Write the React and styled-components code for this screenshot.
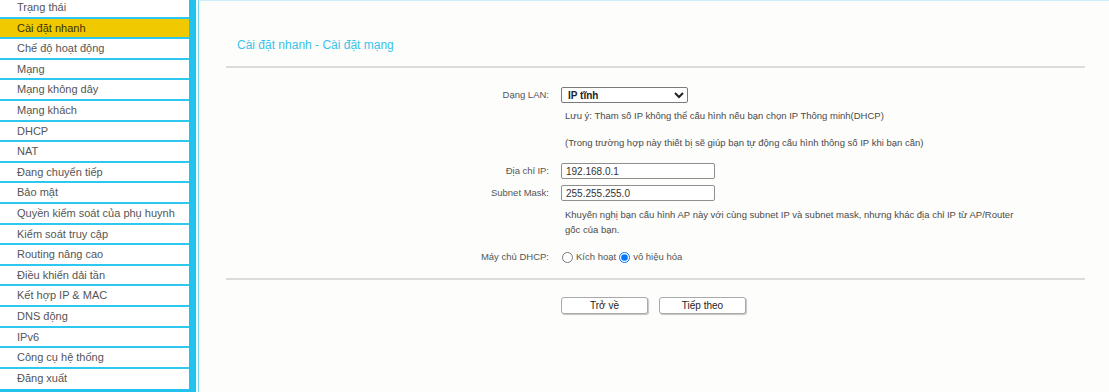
import React from 'react';
import styled, { createGlobalStyle } from 'styled-components';

const GlobalStyle = createGlobalStyle`
    html, body {
        margin: 0;
        padding: 0;
        background: #fdfdfb;
        font-family: "Liberation Sans", Arial, sans-serif;
        overflow: hidden;
    }
`;

const Page = styled.div`
    display: flex;
    align-items: flex-start;
    width: 1109px;
    height: 392px;
    overflow: hidden;
    background: #fdfdfb;
`;

const Sidebar = styled.ul`
    flex: 0 0 189px;
    margin: -2px 0 0 0;
    padding: 0;
    list-style: none;
    border-right: 7px solid #22c4ef;
    border-bottom: 4px solid #22c4ef;
    background: #fff;
`;

const MenuItem = styled.li`
    height: 18.6px;
    line-height: 18.6px;
    padding-left: 17px;
    border-bottom: 2px solid #2cc8f0;
    font-size: 11px;
    color: ${p => (p.$active ? '#3a3000' : '#555')};
    background: ${p => (p.$active ? '#f1c900' : '#fff')};
    white-space: nowrap;

    &:last-child {
        border-bottom: 0;
        height: 20.6px;
    }
`;

const Main = styled.div`
    flex: 1;
    align-self: stretch;
    margin-left: 2px;
    border-left: 1px solid #6fd6f3;
    border-top: 1px solid #c9f1fb;
    background: #fdfdfb;
`;

const Title = styled.h2`
    margin: 0;
    padding: 37px 0 0 38px;
    height: 28px;
    font-size: 12px;
    font-weight: normal;
    color: #39c3ea;
`;

const Rule = styled.div`
    margin: 0 24px 0 27px;
    height: 2px;
    background: #dcdcdc;
`;

const Form = styled.div`
    display: grid;
    grid-template-columns: 323px auto;
    column-gap: 12px;
    padding: 19px 0 0 27px;
    height: 191px;
    align-content: start;
    font-size: 9.5px;
    color: #555;
`;

const Label = styled.div`
    text-align: right;
    height: ${p => p.$h || 22}px;
    line-height: 16px;
`;

const Control = styled.div`
    display: flex;
    align-items: flex-start;
    height: ${p => p.$h || 22}px;
`;

const Select = styled.select`
    width: 127px;
    height: 16px;
    padding: 0 2px;
    border: 1px solid #7a7a7a;
    border-radius: 2px;
    background: #fff;
    font-family: inherit;
    font-size: 10px;
    font-weight: bold;
    color: #222;
`;

const Note = styled.div`
    grid-column: 2;
    padding-left: 4px;
    height: ${p => p.$h}px;
    line-height: 15px;
    color: #4a4a4a;
`;

const TextInput = styled.input`
    box-sizing: border-box;
    width: 154px;
    height: 16px;
    padding: 0 4px;
    border: 1px solid #8f8f8f;
    border-radius: 2px;
    background: #fff;
    font-family: inherit;
    font-size: 10px;
    color: #333;
    outline: none;
`;

const RadioLabel = styled.label`
    display: inline-flex;
    align-items: center;
    gap: 2px;
    margin-right: 2px;
    line-height: 16px;
    color: #555;
`;

const Radio = styled.input`
    width: 11px;
    height: 11px;
    margin: 0 1px 0 1px;
`;

const Buttons = styled.div`
    display: flex;
    gap: 11px;
    padding: 17px 0 0 362px;
`;

const Button = styled.button`
    width: 87px;
    height: 17px;
    padding: 0;
    border: 1px solid #a9a9a9;
    border-radius: 3px;
    background: #fff;
    box-shadow: 1px 1px 1px #c4c4c4;
    font-family: inherit;
    font-size: 10px;
    color: #222;
`;

const menu = [
    'Trạng thái',
    'Cài đặt nhanh',
    'Chế độ hoạt động',
    'Mạng',
    'Mạng không dây',
    'Mạng khách',
    'DHCP',
    'NAT',
    'Đang chuyển tiếp',
    'Bảo mật',
    'Quyền kiểm soát của phụ huynh',
    'Kiểm soát truy cập',
    'Routing nâng cao',
    'Điều khiển dải tần',
    'Kết hợp IP & MAC',
    'DNS động',
    'IPv6',
    'Công cụ hệ thống',
    'Đăng xuất',
];

export default () => (
    <Page>
        <GlobalStyle />
        <Sidebar>
            {menu.map((item, i) => (
                <MenuItem key={item} $active={i === 1}>{item}</MenuItem>
            ))}
        </Sidebar>
        <Main>
            <Title>Cài đặt nhanh - Cài đặt mạng</Title>
            <Rule />
            <Form>
                <Label $h={21}>Dạng LAN:</Label>
                <Control $h={21}>
                    <Select defaultValue="static">
                        <option value="static">IP tĩnh</option>
                        <option value="dhcp">IP Thông minh(DHCP)</option>
                    </Select>
                </Control>
                <Note $h={27}>Lưu ý: Tham số IP không thể cấu hình nếu bạn chọn IP Thông minh(DHCP)</Note>
                <Note $h={28}>(Trong trường hợp này thiết bị sẽ giúp bạn tự động cấu hình thông số IP khi bạn cần)</Note>
                <Label>Địa chỉ IP:</Label>
                <Control>
                    <TextInput defaultValue="192.168.0.1" />
                </Control>
                <Label>Subnet Mask:</Label>
                <Control>
                    <TextInput defaultValue="255.255.255.0" />
                </Control>
                <Note $h={42}>
                    Khuyến nghị bạn cấu hình AP này với cùng subnet IP và subnet mask, nhưng khác địa chỉ IP từ AP/Router
                    <br />
                    gốc của bạn.
                </Note>
                <Label>Máy chủ DHCP:</Label>
                <Control>
                    <RadioLabel>
                        <Radio type="radio" name="dhcp" />
                        Kích hoạt
                    </RadioLabel>
                    <RadioLabel>
                        <Radio type="radio" name="dhcp" defaultChecked />
                        vô hiệu hóa
                    </RadioLabel>
                </Control>
            </Form>
            <Rule />
            <Buttons>
                <Button>Trở về</Button>
                <Button>Tiếp theo</Button>
            </Buttons>
        </Main>
    </Page>
);
